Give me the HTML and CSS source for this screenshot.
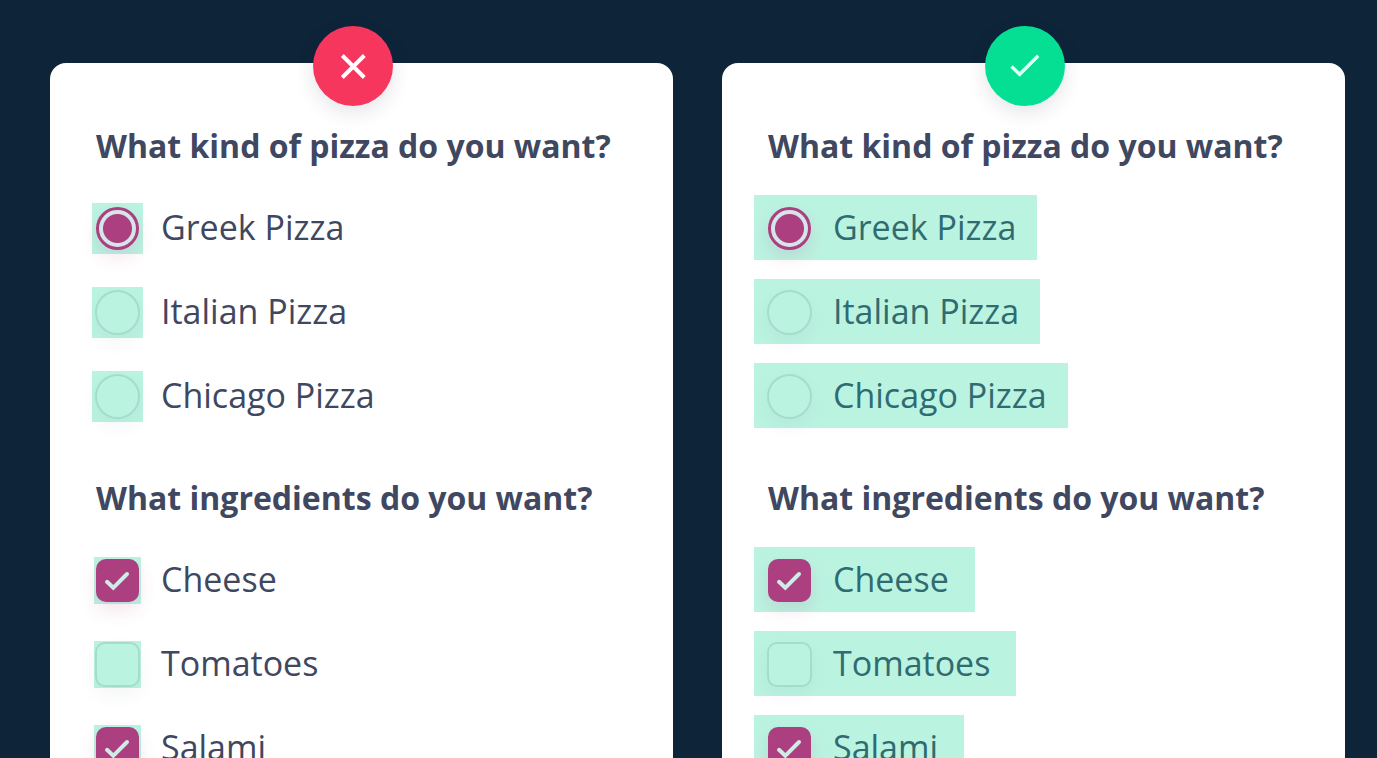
FILE: index.html
```html
<!DOCTYPE html>
<html lang="en">
<head>
<meta charset="utf-8">
<meta name="viewport" content="width=device-width, initial-scale=1">
<title>Pizza form</title>
<link rel="stylesheet" href="styles.css">
</head>
<body>
<main class="comparison">
  <form class="card card--bad">
    <div class="badge badge--bad">
      <svg viewBox="0 0 80 80" aria-hidden="true"><path d="M29.3 29.5 51.3 51.5M51.3 29.5 29.3 51.5" stroke-width="4"/></svg>
    </div>
    <fieldset class="group">
      <legend class="question">What kind of pizza do you want?</legend>
      <div class="options">
        <div class="option"><span class="target"><input class="control radio" type="radio" name="pizza-a" id="a-greek" checked></span><label for="a-greek">Greek Pizza</label></div>
        <div class="option"><span class="target"><input class="control radio" type="radio" name="pizza-a" id="a-italian"></span><label for="a-italian">Italian Pizza</label></div>
        <div class="option"><span class="target"><input class="control radio" type="radio" name="pizza-a" id="a-chicago"></span><label for="a-chicago">Chicago Pizza</label></div>
      </div>
    </fieldset>
    <fieldset class="group">
      <legend class="question">What ingredients do you want?</legend>
      <div class="options options--checks">
        <div class="option"><span class="target"><input class="control checkbox" type="checkbox" id="a-cheese" checked><svg class="tick" viewBox="0 0 43 43" aria-hidden="true"><path d="M11 22.8 17.3 28.8 31 15"/></svg></span><label for="a-cheese">Cheese</label></div>
        <div class="option"><span class="target"><input class="control checkbox" type="checkbox" id="a-tomatoes"></span><label for="a-tomatoes">Tomatoes</label></div>
        <div class="option"><span class="target"><input class="control checkbox" type="checkbox" id="a-salami" checked><svg class="tick" viewBox="0 0 43 43" aria-hidden="true"><path d="M11 22.8 17.3 28.8 31 15"/></svg></span><label for="a-salami">Salami</label></div>
      </div>
    </fieldset>
  </form>

  <form class="card card--good">
    <div class="badge badge--good">
      <svg viewBox="0 0 80 80" aria-hidden="true"><path d="M26.5 40.5 34.7 48.3 53.2 29.8" stroke-width="3.4"/></svg>
    </div>
    <fieldset class="group">
      <legend class="question">What kind of pizza do you want?</legend>
      <div class="options">
        <div class="option"><span class="target"><input class="control radio" type="radio" name="pizza-b" id="b-greek" checked></span><label for="b-greek">Greek Pizza</label></div>
        <div class="option"><span class="target"><input class="control radio" type="radio" name="pizza-b" id="b-italian"></span><label for="b-italian">Italian Pizza</label></div>
        <div class="option"><span class="target"><input class="control radio" type="radio" name="pizza-b" id="b-chicago"></span><label for="b-chicago">Chicago Pizza</label></div>
      </div>
    </fieldset>
    <fieldset class="group">
      <legend class="question">What ingredients do you want?</legend>
      <div class="options options--checks">
        <div class="option"><span class="target"><input class="control checkbox" type="checkbox" id="b-cheese" checked><svg class="tick" viewBox="0 0 43 43" aria-hidden="true"><path d="M11 22.8 17.3 28.8 31 15"/></svg></span><label for="b-cheese">Cheese</label></div>
        <div class="option"><span class="target"><input class="control checkbox" type="checkbox" id="b-tomatoes"></span><label for="b-tomatoes">Tomatoes</label></div>
        <div class="option"><span class="target"><input class="control checkbox" type="checkbox" id="b-salami" checked><svg class="tick" viewBox="0 0 43 43" aria-hidden="true"><path d="M11 22.8 17.3 28.8 31 15"/></svg></span><label for="b-salami">Salami</label></div>
      </div>
    </fieldset>
  </form>
</main>
</body>
</html>
```
FILE: styles.css
```css
:root {
  --navy: #0e2439;
  --ink: #404760;
  --mint: #bbf3e1;
  --berry: #ab3f7f;
}

* {
  box-sizing: border-box;
}

body {
  margin: 0;
  background: var(--navy);
  color: var(--ink);
  font-family: "Open Sans", sans-serif;
  overflow: hidden;
}

.comparison {
  display: grid;
  grid-template-columns: 1fr 1fr;
  gap: 49px;
  padding: 63px 32px 0 50px;
}

.card {
  position: relative;
  padding: 61px 32px 48px;
  border-radius: 16px;
  background: #fff;
}

.badge {
  position: absolute;
  top: -37px;
  left: 50%;
  width: 80px;
  height: 80px;
  margin-left: -49px;
  border-radius: 50%;
  box-shadow: 0 6px 20px rgba(30, 30, 70, 0.12);
}

.badge svg {
  display: block;
  fill: none;
  stroke: #fff;
}

.badge--bad {
  background: #f7365d;
}

.badge--good {
  background: #05df94;
}

.badge--good svg {
  stroke: #e2fff5;
}

.group {
  min-width: 0;
  margin: 0;
  padding: 0;
  border: 0;
}

.group + .group {
  margin-top: 48px;
}

.question {
  padding: 0 14px;
  font-size: 32px;
  font-weight: 700;
  line-height: 44px;
}

.options {
  display: flex;
  flex-direction: column;
  align-items: flex-start;
  gap: 19px;
  padding-top: 27px;
}

.option {
  display: flex;
  align-items: center;
  gap: 22px;
  height: 65px;
  padding: 2px 21px 0 14px;
  font-size: 34px;
  line-height: 48px;
}

.option label {
  padding-bottom: 4px;
}

.options--checks .option {
  padding-right: 26px;
}

.target {
  display: grid;
  place-items: center;
  width: 43px;
  height: 43px;
}

.card--bad .target {
  width: 51px;
  height: 51px;
  margin: 0 -4px;
  background: var(--mint);
}

.card--bad .options--checks .target {
  width: 47px;
  height: 47px;
  margin: 0 -2px;
}

.card--good .option {
  background: var(--mint);
  color: #2f6b70;
}

.control {
  grid-area: 1 / 1;
  appearance: none;
  width: 45px;
  height: 45px;
  margin: -1px;
  border: 2px solid #a5dccb;
  box-shadow: 0 8px 18px rgba(40, 50, 90, 0.05);
}

.control:checked {
  width: 43px;
  height: 43px;
  margin: 0;
  box-shadow: 0 8px 18px rgba(171, 63, 127, 0.14);
}

.radio {
  border-radius: 50%;
}

.radio:checked {
  border: 3px solid var(--berry);
  background: radial-gradient(circle, var(--berry) 14px, #d5e5ea 15px);
}

.checkbox {
  border-radius: 10px;
}

.checkbox:checked {
  border: 0;
  background: var(--berry);
}

.tick {
  grid-area: 1 / 1;
  z-index: 1;
  width: 43px;
  height: 43px;
  fill: none;
  stroke: #d0ebe7;
  stroke-width: 4;
  stroke-linecap: round;
  pointer-events: none;
}
```
